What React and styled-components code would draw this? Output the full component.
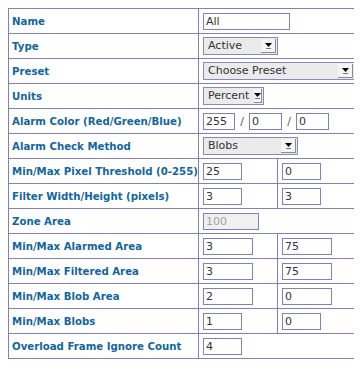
import React from 'react'
import styled, { createGlobalStyle } from 'styled-components'

const GlobalStyle = createGlobalStyle`
  body {
    margin: 8px;
    background: #ffffff;
    font-family: "DejaVu Sans", Verdana, sans-serif;
  }
`

const Page = styled.div`
  display: flex;
  align-items: flex-start;
`

const Frame = styled.div`
  position: relative;
  margin-left: 4px;
  width: 1px;
  height: 363px;
  background: #5cc05c;
`

const Marker = styled.svg`
  position: absolute;
  left: -3px;
  top: -3px;
`

const Table = styled.table`
  border-collapse: collapse;
  table-layout: fixed;
  width: 349px;
`

const Row = styled.tr`
  height: 25px;
`

const Label = styled.th`
  border: 1px solid #8080c0;
  padding: 0 0 0 3px;
  text-align: left;
  font-size: 10.2px;
  font-weight: bold;
  color: #13659b;
  white-space: nowrap;
`

const Cell = styled.td`
  border: 1px solid #8080c0;
  padding: 0 4px;
  white-space: nowrap;
  vertical-align: middle;
  line-height: 0;
`

const Input = styled.input`
  box-sizing: border-box;
  width: ${p => p.w}px;
  height: 17px;
  margin: 0;
  padding: 0 2px;
  border: 1px solid #8080c0;
  font-family: "DejaVu Sans", Verdana, sans-serif;
  font-size: 11px;
  color: ${p => (p.disabled ? '#a0a0a0' : '#333333')};
  background: ${p => (p.disabled ? '#f0f0f0' : '#ffffff')};
  vertical-align: middle;
  outline: none;
`

const Slash = styled.span`
  display: inline-block;
  width: 14px;
  text-align: center;
  font-size: 11px;
  line-height: 17px;
  color: #555555;
  vertical-align: middle;
`

const SelectBox = styled.span`
  box-sizing: border-box;
  display: inline-flex;
  align-items: stretch;
  width: ${p => p.w}px;
  height: 18px;
  border: 1px solid #8a88b8;
  background: #ebebeb;
  vertical-align: middle;
`

const SelectText = styled.span`
  flex: 1;
  padding: 0 4px;
  font-size: 11px;
  line-height: 16px;
  color: #333333;
`

const ArrowBox = styled.span`
  box-sizing: border-box;
  width: 15px;
  margin: 1px;
  display: flex;
  align-items: center;
  justify-content: center;
  background: #f4f4f4;
  border-right: 1px solid #8c8c8c;
  border-bottom: 1px solid #8c8c8c;
`

const Select = ({ w, value }) => (
  <SelectBox w={w}>
    <SelectText>{value}</SelectText>
    <ArrowBox>
      <svg width="7" height="6" viewBox="0 0 7 6">
        <path d="M0 0h7L3.5 4z" fill="#000" />
        <path d="M1 5.5h5" stroke="#777" strokeWidth="1" />
      </svg>
    </ArrowBox>
  </SelectBox>
)

const rows = [
  { label: 'Name', one: <Input w={87} defaultValue="All" /> },
  { label: 'Type', one: <Select w={75} value="Active" /> },
  { label: 'Preset', one: <Select w={152} value="Choose Preset" /> },
  { label: 'Units', one: <Select w={61} value="Percent" /> },
  {
    label: 'Alarm Color (Red/Green/Blue)',
    one: (
      <>
        <Input w={32} defaultValue="255" />
        <Slash>/</Slash>
        <Input w={33} defaultValue="0" />
        <Slash>/</Slash>
        <Input w={33} defaultValue="0" />
      </>
    ),
  },
  { label: 'Alarm Check Method', one: <Select w={95} value="Blobs" /> },
  { label: 'Min/Max Pixel Threshold (0-255)', two: ['25', '0'], w: 39 },
  { label: 'Filter Width/Height (pixels)', two: ['3', '3'], w: 39 },
  { label: 'Zone Area', one: <Input w={56} defaultValue="100" disabled /> },
  { label: 'Min/Max Alarmed Area', two: ['3', '75'], w: 50 },
  { label: 'Min/Max Filtered Area', two: ['3', '75'], w: 50 },
  { label: 'Min/Max Blob Area', two: ['2', '0'], w: 50 },
  { label: 'Min/Max Blobs', two: ['1', '0'], w: 39 },
  { label: 'Overload Frame Ignore Count', one: <Input w={39} defaultValue="4" /> },
]

export default function App() {
  return (
    <Page>
      <GlobalStyle />
      <Table>
        <colgroup>
          <col style={{ width: 190 }} />
          <col style={{ width: 79 }} />
          <col style={{ width: 80 }} />
        </colgroup>
        <tbody>
          {rows.map((row, i) => (
            <Row key={i}>
              <Label>{row.label}</Label>
              {row.two ? (
                row.two.map((v, j) => (
                  <Cell key={j}>
                    <Input w={row.w} defaultValue={v} />
                  </Cell>
                ))
              ) : (
                <Cell colSpan={2}>{row.one}</Cell>
              )}
            </Row>
          ))}
        </tbody>
      </Table>
      <Frame>
        <Marker width="5" height="7" viewBox="0 0 5 7">
          <path d="M0 3.5L5 0v7z" fill="#3aa83a" />
        </Marker>
      </Frame>
    </Page>
  )
}
